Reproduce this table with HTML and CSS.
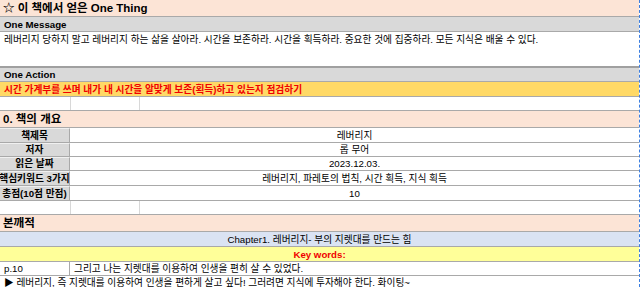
FILE: index.html
```html
<!DOCTYPE html>
<html lang="ko">
<head>
<meta charset="utf-8">
<title>One Thing</title>
<link rel="stylesheet" href="styles.css">
</head>
<body>
<div class="sheet">
  <div class="row title">☆ 이 책에서 얻은 One Thing</div>
  <div class="row head h15">One Message</div>
  <div class="row body">레버리지 당하지 말고 레버리지 하는 삶을 살아라. 시간을 보존하라. 시간을 획득하라. 중요한 것에 집중하라. 모든 지식은 배울 수 있다.</div>
  <div class="row head h14">One Action</div>
  <div class="row action">시간 가계부를 쓰며 내가 내 시간을 알맞게 보존(획득)하고 있는지 점검하기</div>
  <div class="row empty"><div class="c1"></div><div class="c2"></div><div class="c3"></div></div>
  <div class="row section">0. 책의 개요</div>
  <div class="row kv h15"><div class="label"><span>책제목</span></div><div class="value">레버리지</div></div>
  <div class="row kv h14"><div class="label"><span>저자</span></div><div class="value">롭 무어</div></div>
  <div class="row kv h14"><div class="label"><span>읽은 날짜</span></div><div class="value">2023.12.03.</div></div>
  <div class="row kv h15"><div class="label"><span>핵심키워드 3가지</span></div><div class="value">레버리지, 파레토의 법칙, 시간 획득, 지식 획득</div></div>
  <div class="row kv h15"><div class="label"><span>총점(10점 만점)</span></div><div class="value">10</div></div>
  <div class="row empty"><div class="c1"></div><div class="c2"></div><div class="c3"></div></div>
  <div class="row section">본깨적</div>
  <div class="row chapter">Chapter1. 레버리지- 부의 지렛대를 만드는 힘</div>
  <div class="row keywords">Key words:</div>
  <div class="row note"><div class="page">p.10</div><div class="text">그리고 나는 지렛대를 이용하여 인생을 편히 살 수 있었다.</div></div>
  <div class="row last">▶ 레버리지, 즉 지렛대를 이용하여 인생을 편하게 살고 싶다! 그러려면 지식에 투자해야 한다. 화이팅~</div>
</div>
</body>
</html>
```

FILE: styles.css
```css
html, body {
  margin: 0;
  padding: 0;
  background: #ffffff;
}

body {
  font-family: "Liberation Sans", "Noto Sans CJK KR", sans-serif;
  font-size: 9.7px;
  line-height: 11px;
  color: #000000;
  overflow: hidden;
}

.sheet {
  width: 640px;
  height: 287px;
  box-sizing: border-box;
  border-right: 1px dashed #3d7fe0;
  overflow: hidden;
}

.row {
  display: flex;
  align-items: flex-end;
  box-sizing: border-box;
  border-bottom: 1px solid #a9a9a9;
  padding: 0 3px 1px 4px;
  white-space: nowrap;
  overflow: hidden;
}

.h14 { height: 14px; }
.h15 { height: 15px; }

.title {
  height: 17px;
  background: #fce4d6;
  font-size: 11.5px;
  line-height: 13px;
  font-weight: bold;
  padding-left: 3px;
}

.head {
  background: #d9d9d9;
  font-weight: bold;
}

.body {
  height: 36px;
  align-items: flex-start;
  padding-top: 2px;
  border-bottom-color: #a0a0a0;
  border-bottom-width: 2px;
}

.action {
  height: 15px;
  background: #ffd966;
  color: #f00000;
  font-weight: bold;
}

.empty {
  height: 14px;
  padding: 0;
}

.empty .c1 {
  width: 70px;
  height: 100%;
  border-right: 1px solid #d8d8d8;
}

.empty .c2 {
  width: 68px;
  height: 100%;
  border-right: 1px solid #d8d8d8;
}

.empty .c3 {
  flex: 1;
}

.section {
  height: 17px;
  background: #fce4d6;
  font-size: 11.5px;
  line-height: 13px;
  font-weight: bold;
  padding-left: 3px;
}

.kv {
  padding: 0;
  align-items: stretch;
}

.kv .label {
  width: 70px;
  flex: none;
  box-sizing: border-box;
  background: #d9d9d9;
  border-right: 1px solid #a9a9a9;
  border-top: 1px solid #f0f0f0;
  font-weight: bold;
  display: flex;
  justify-content: center;
  align-items: flex-end;
  padding-bottom: 1px;
  overflow: hidden;
}

.kv .label span {
  flex: none;
}

.kv .value {
  flex: 1;
  display: flex;
  justify-content: center;
  align-items: flex-end;
  padding-bottom: 1px;
}

.chapter {
  height: 15px;
  background: #dae3f3;
  justify-content: center;
  padding: 0 0 1px;
}

.keywords {
  height: 15px;
  background: #ffff99;
  color: #f00000;
  font-weight: bold;
  justify-content: center;
  padding: 0 0 1px;
}

.note {
  height: 14px;
  padding: 0;
  align-items: stretch;
}

.note .page {
  width: 70px;
  flex: none;
  box-sizing: border-box;
  border-right: 1px solid #a9a9a9;
  padding: 0 0 1px 4px;
  display: flex;
  align-items: flex-end;
}

.note .text {
  flex: 1;
  padding: 0 0 1px 4px;
  display: flex;
  align-items: flex-end;
}

.last {
  height: 11px;
  border-bottom: none;
  align-items: flex-start;
  padding-top: 1px;
}
```
